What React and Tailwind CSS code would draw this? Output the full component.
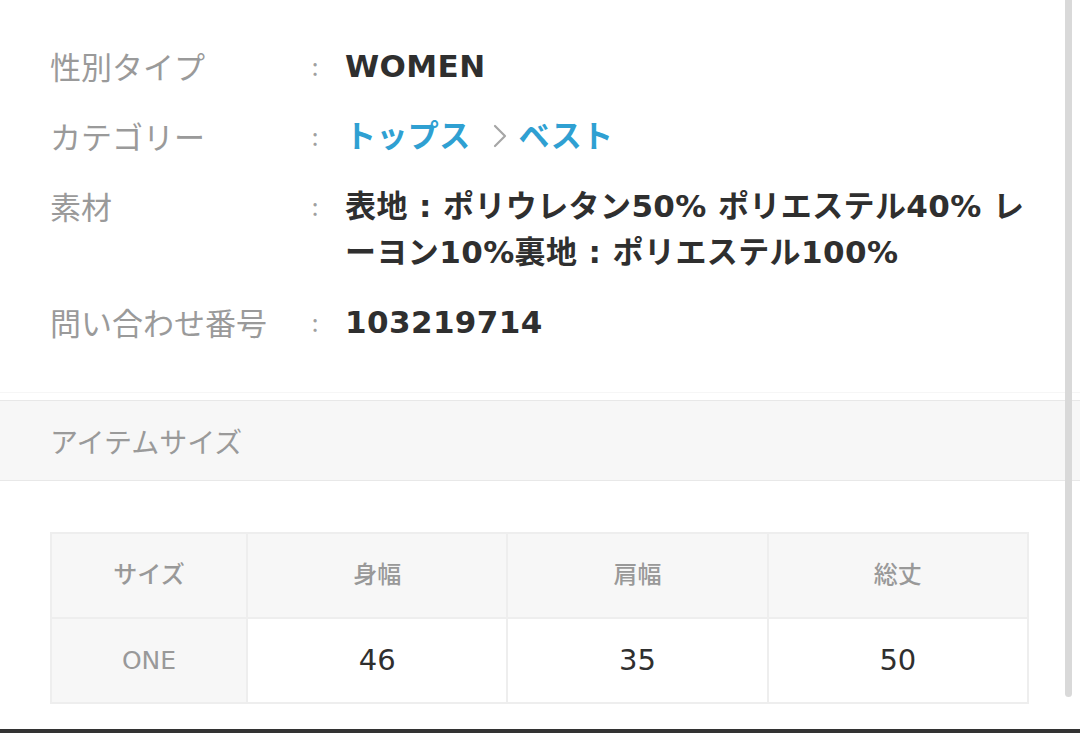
import React from "react";

const specs = [
  { label: "性別タイプ", value: ["WOMEN"] },
  { label: "カテゴリー", link: true },
  {
    label: "素材",
    value: ["表地 : ポリウレタン50% ポリエステル40% レ", "ーヨン10%裏地 : ポリエステル100%"],
  },
  { label: "問い合わせ番号", value: ["103219714"] },
];

const sizeHead = ["身幅", "肩幅", "総丈"];
const sizeRows = [{ size: "ONE", values: ["46", "35", "50"] }];

const App = () => {
  return (
    <div className="relative h-[733px] w-[1080px] overflow-hidden bg-white flex flex-col font-['Noto_Sans_CJK_JP','Noto_Sans',sans-serif]">
      {/* product details */}
      <div className="pt-[43px] px-[50px] flex flex-col gap-[24px]">
        {specs.map((x) => (
          <div className="flex items-start text-[31px] leading-[46px]" key={x.label}>
            <div className="w-[250px] shrink-0 text-[#9a9a9a]">{x.label}</div>
            <div className="w-[30px] shrink-0 text-center text-[24px] text-[#a0a0a0]">:</div>
            <div className="ml-[15px] font-semibold tracking-[0.4px] text-[#2f2f2f] font-['DejaVu_Sans','Noto_Sans_CJK_JP',sans-serif]">
              {x.link ? (
                <span className="flex items-center text-[#2fa0d2]">
                  <span>トップス</span>
                  <svg className="ml-[22px] mr-[12px]" width="14" height="24" viewBox="0 0 14 24" fill="none">
                    <path d="M2 2 L12 12 L2 22" stroke="#a6a6a6" strokeWidth="2.2" strokeLinecap="round" strokeLinejoin="round" />
                  </svg>
                  <span>ベスト</span>
                </span>
              ) : (
                x.value.map((line) => (
                  <div className="whitespace-nowrap" key={line}>
                    {line}
                  </div>
                ))
              )}
            </div>
          </div>
        ))}
      </div>

      <div className="mt-[47px] h-px bg-[#f6f6f6]"></div>

      {/* item size header */}
      <div className="mt-[7px] h-[81px] border-y border-[#e8e8e8] bg-[#f7f7f7] px-[50px] flex items-center">
        <span className="text-[28px] text-[#9a9a9a]">アイテムサイズ</span>
      </div>

      {/* size table */}
      <div className="mt-[51px] px-[50px]">
        <table className="w-[979px] border-collapse table-fixed">
          <thead>
            <tr className="h-[85px] bg-[#f7f7f7]">
              <th className="w-[196px] pb-[5px] border-2 border-[#eeeeee] text-[24px] font-medium text-[#999999]">サイズ</th>
              {sizeHead.map((h) => (
                <th className="pb-[5px] border-2 border-[#eeeeee] text-[24px] font-medium text-[#999999]" key={h}>
                  {h}
                </th>
              ))}
            </tr>
          </thead>
          <tbody className="font-['DejaVu_Sans','Noto_Sans_CJK_JP',sans-serif]">
            {sizeRows.map((r) => (
              <tr className="h-[85px]" key={r.size}>
                <td className="border-2 border-[#eeeeee] bg-[#f7f7f7] text-center text-[25px] text-[#999999]">
                  {r.size}
                </td>
                {r.values.map((v, i) => (
                  <td className="border-2 border-[#eeeeee] text-center text-[29px] text-[#2f2f2f]" key={i}>
                    {v}
                  </td>
                ))}
              </tr>
            ))}
          </tbody>
        </table>
      </div>

      <div className="mt-auto h-[4px] bg-[#333333]"></div>

      {/* scrollbar */}
      <div className="absolute right-[8px] top-0 h-[697px] w-[7px] rounded-b-full bg-[#d9d9d9]"></div>
    </div>
  );
};

export default App;
